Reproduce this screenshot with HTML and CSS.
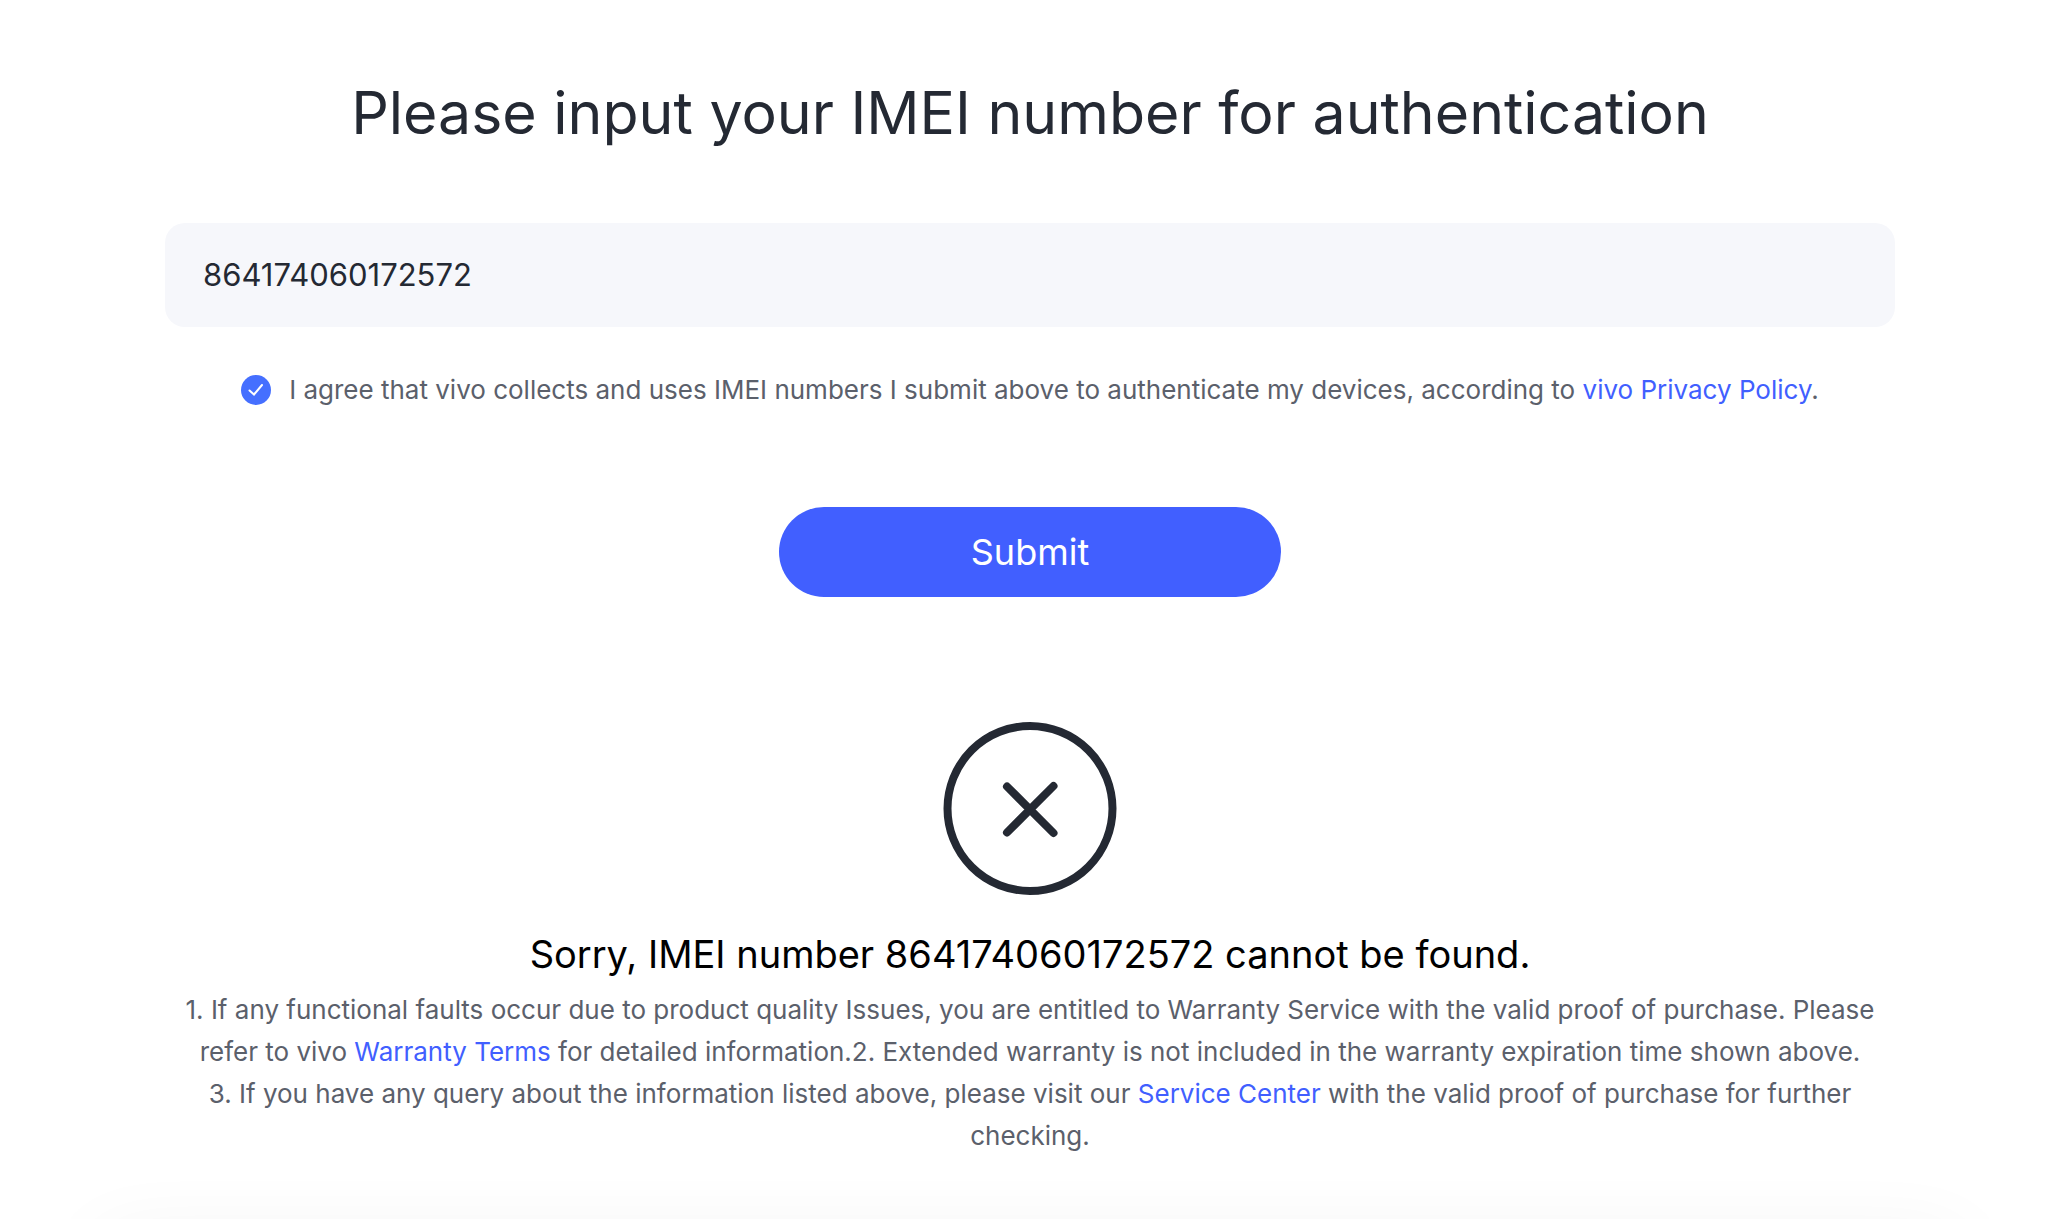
FILE: index.html
```
<!DOCTYPE html>
<html lang="en">
<head>
  <meta charset="utf-8">
  <meta name="viewport" content="width=device-width, initial-scale=1">
  <title>IMEI authentication</title>
  <link rel="stylesheet" href="styles.css">
</head>
<body>
  <main class="page">
    <h1 class="title">Please input your IMEI number for authentication</h1>

    <form class="form">
      <input class="imei" type="text" inputmode="numeric" aria-label="IMEI number" value="864174060172572">
      <div class="agreement">
        <input class="agreement-box" id="agree" type="checkbox" checked>
        <svg class="agreement-tick" viewBox="0 0 30 30" aria-hidden="true">
          <path d="M8.500 15.500L13 19.500L21 10"/>
        </svg>
        <label class="agreement-text" for="agree">I agree that vivo collects and uses IMEI numbers I submit above to authenticate my devices, according to <a href="#privacy">vivo Privacy Policy</a>.</label>
      </div>
      <button class="submit" type="button">Submit</button>
    </form>

    <section class="result">
      <svg class="result-icon" viewBox="0 0 174 174" aria-hidden="true">
        <circle cx="87" cy="86.500" r="82.500"/>
        <path d="M64 64.500L110.500 111M110.500 64L64 110.500"/>
      </svg>
      <h2 class="result-title">Sorry, IMEI number 864174060172572 cannot be found.</h2>
      <p class="notes">1. If any functional faults occur due to product quality Issues, you are entitled to Warranty Service with the valid proof of purchase. Please refer to vivo <a href="#warranty">Warranty Terms</a> for detailed information.2. Extended warranty is not included in the warranty expiration time shown above.<br>3. If you have any query about the information listed above, please visit our <a href="#service">Service Center</a> with the valid proof of purchase for further checking.</p>
    </section>
  </main>
</body>
</html>
```
FILE: styles.css
```
* {
  box-sizing: border-box;
}

body {
  margin: 0;
  background: #fff;
  color: #242933;
  font-family: Inter, "Noto Sans", sans-serif;
}

a {
  color: #415fff;
  text-decoration: none;
}

.page {
  position: relative;
  min-height: 100vh;
  padding: 71px 153px 48px 165px;
  overflow: hidden;
}

/* Soft shade along the bottom edge of the page */
.page::after {
  content: "";
  position: absolute;
  right: 108px;
  bottom: -40px;
  left: 120px;
  height: 20px;
  box-shadow: 0 20px 80px 20px rgba(0, 0, 0, 0.06);
}

.title {
  margin: 0 0 68px;
  font-size: 59px;
  font-weight: 400;
  line-height: 84px;
  text-align: center;
}

.form,
.result {
  display: flex;
  flex-direction: column;
  align-items: center;
}

.imei {
  width: 100%;
  height: 104px;
  padding: 0 38px 2px;
  border: 0;
  border-radius: 20px;
  background: #f6f7fb;
  color: inherit;
  font: inherit;
  font-size: 31px;
}

.agreement {
  display: grid;
  grid-template-columns: 30px auto;
  column-gap: 18px;
  align-items: center;
  margin-top: 42px;
}

.agreement-box,
.agreement-tick {
  grid-area: 1 / 1;
  width: 30px;
  height: 30px;
  margin: 0;
}

.agreement-box {
  border-radius: 50%;
  background: #dcdfe6;
  appearance: none;
}

.agreement-box:checked {
  background: #456fff;
}

.agreement-tick {
  fill: none;
  stroke: #fff;
  stroke-width: 2;
  stroke-linecap: round;
  pointer-events: none;
}

.agreement-text,
.notes {
  color: #5b606b;
  font-size: 26px;
  line-height: 42px;
}

.submit {
  width: 502px;
  max-width: 100%;
  height: 90px;
  margin-top: 96px;
  border: 0;
  border-radius: 45px;
  background: #415fff;
  color: #fff;
  font: inherit;
  font-size: 36px;
}

.result {
  margin-top: 125px;
}

.result-icon {
  width: 174px;
  height: 174px;
  fill: none;
  stroke: #242933;
  stroke-width: 8;
}

.result-icon path {
  stroke-linecap: round;
}

.result-title {
  margin: 30px 0 7px;
  color: #000;
  font-size: 38px;
  font-weight: 400;
  line-height: 56px;
  text-align: center;
}

.notes {
  margin: 0;
  text-align: center;
}
```
